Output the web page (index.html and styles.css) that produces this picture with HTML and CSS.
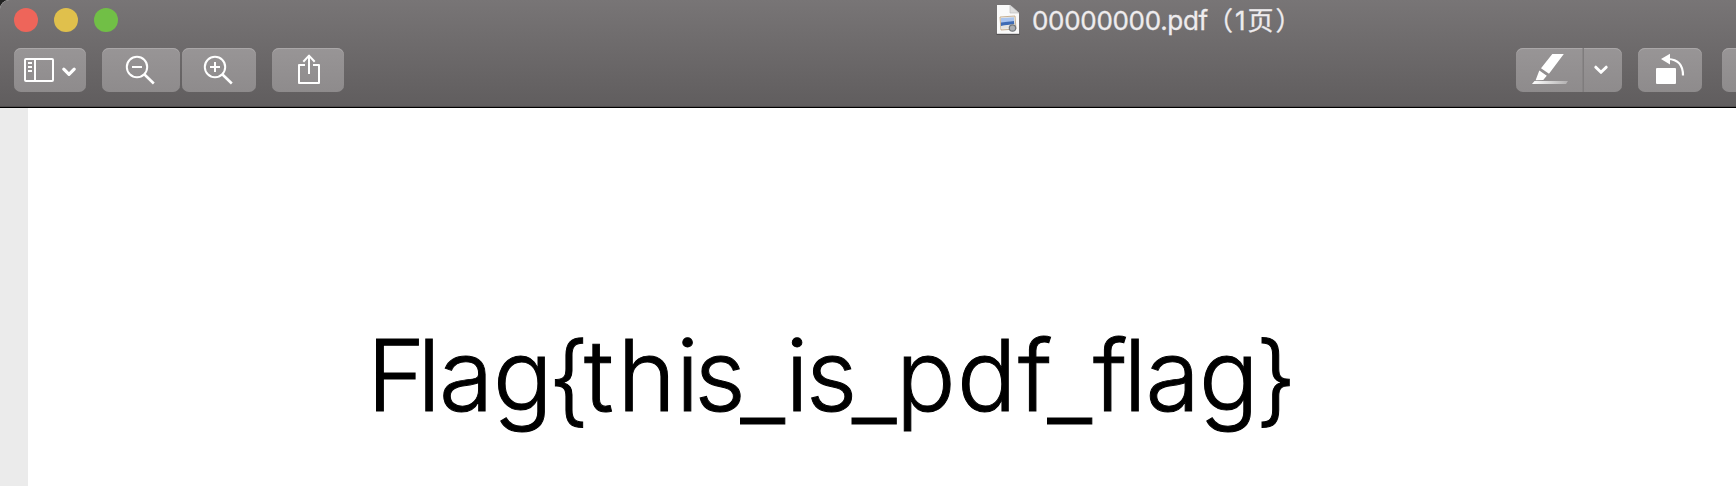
FILE: index.html
```
<!DOCTYPE html>
<html lang="zh">
<head>
<meta charset="utf-8">
<title>00000000.pdf</title>
<link rel="stylesheet" href="styles.css">
</head>
<body>
<div class="window">
  <header class="chrome">
    <div class="titlebar">
      <div class="lights"><i class="light red"></i><i class="light yellow"></i><i class="light green"></i></div>
      <div class="title">
        <svg class="doc" width="24" height="32" viewBox="0 0 24 32">
          <path d="M1 1h13l9 8v21H1z" fill="#fafafa"/>
          <path d="M14 1v8h9z" fill="#dedede" stroke="#bbb" stroke-width=".6"/>
          <path d="M.5 30.3h23" stroke="#4c494a"/>
          <path d="M4 13l15-1 1 13-15 1z" fill="#f4f1e8" stroke="#c2a98a" stroke-width=".9"/>
          <path d="M5 14l13-.8.3 4L5 19z" fill="#a9c4ee"/>
          <path d="M5 18.5l13-1.5.3 3L5 22z" fill="#3f6cb5"/>
          <path d="M5 22l10-1v3L5 25z" fill="#e5e5e2"/>
          <circle cx="16.5" cy="24" r="3.2" fill="#a9adb2" stroke="#73777b" stroke-width="1.2"/>
        </svg>
        <span class="name">00000000.pdf</span><span class="pages">（1页）</span>
      </div>
    </div>
    <div class="toolbar">
      <div class="group">
        <button class="btn sidebar"><svg width="72" height="44" viewBox="0 0 72 44" fill="none" stroke="#fff" stroke-width="2">
          <rect x="11" y="11" width="28" height="22" rx="1"/><path d="M21 11v22M14 15h4M14 19h4M14 23h4"/>
          <path d="M49.8 21.2L55 26.3l5.2-5.1" stroke-width="3.2" stroke-linecap="round" stroke-linejoin="round"/></svg></button>
        <button class="btn zoom-out"><svg width="78" height="44" viewBox="0 0 78 44" fill="none" stroke="#fff" stroke-width="2">
          <circle cx="35" cy="19" r="10.2"/><path d="M30 19h10"/><path d="M42.5 26.5l9.3 9" stroke-width="2.6"/></svg></button>
        <button class="btn zoom-in"><svg width="74" height="44" viewBox="0 0 74 44" fill="none" stroke="#fff" stroke-width="2">
          <circle cx="33" cy="19" r="10.2"/><path d="M28 19h10M33 14v10"/><path d="M40.5 26.5l9.3 9" stroke-width="2.6"/></svg></button>
        <button class="btn share"><svg width="72" height="44" viewBox="0 0 72 44" fill="none" stroke="#fff" stroke-width="2">
          <path d="M33 17h-6v18h20V17h-6M37 26V8M31.3 13.8L37 7.6l5.7 6.2" stroke-linejoin="round"/></svg></button>
      </div>
      <div class="group">
        <button class="btn markup"><svg width="106" height="44" viewBox="0 0 106 44" fill="#fff">
          <defs><linearGradient id="ink"><stop stop-color="#fff"/><stop offset="1" stop-color="#fff" stop-opacity=".3"/></linearGradient></defs>
          <path d="M66.5 0h1.5v44h-1.5z" fill="#7f7c7d"/>
          <path d="M36.3 6h11.5L33 25.8l-8-5.6zM23.3 22.5l7.5 5.3-3.6 4.1-7.6.4z"/><path d="M18.5 33H52l-2 3H16z" fill="url(#ink)"/>
          <path d="M79.8 19.2L85 24.3l5.2-5.1" fill="none" stroke="#fff" stroke-width="3" stroke-linecap="round" stroke-linejoin="round"/></svg></button>
        <button class="btn rotate"><svg width="64" height="44" viewBox="0 0 64 44" fill="#fff">
          <rect x="18" y="20" width="20" height="16" rx="1"/><path d="M23 11l9-5.2v10.7z"/>
          <path d="M30 11q15 .5 15 16.5" fill="none" stroke="#fff" stroke-width="2.2"/></svg></button>
        <button class="btn next"></button>
      </div>
    </div>
  </header>
  <main class="viewer"><div class="page">
    <svg class="sheet" width="1708" height="378" viewBox="28 108 1708 378">
      <text class="flag" y="410.5" x="367 417.5 439 493 548 584 617.5 676 694.5 740.5 785.5 806 852 896 957 1018 1047.5 1093 1123.5 1145.5 1199 1255.5" dy="0 0 0 0 3 -3 0 0 0 7 -7 0 7 -7 0 0 7 -7 0 0 0 3">Flag{this_is_pdf_flag}</text>
    </svg>
  </div></main>
</div>
</body>
</html>
```
FILE: styles.css
```
body { margin: 0; background: #222; overflow: hidden; }
.window { width: 1736px; height: 486px; overflow: hidden; border-top-left-radius: 9px; display: flex; flex-direction: column; background: #fff; }
.chrome { height: 108px; box-sizing: border-box; border-bottom: 1px solid #000; background: linear-gradient(#787576, #605d5e); box-shadow: inset 0 -1px #4f4c4d; }
.titlebar { height: 40px; display: flex; align-items: center; }
.lights { display: flex; gap: 16px; padding-left: 14px; width: 967px; }
.light { width: 24px; height: 24px; border-radius: 50%; }
.red { background: #ee655a; }
.yellow { background: #e0c04c; }
.green { background: #71bf46; }
.title { display: flex; align-items: center; height: 40px; color: #eeecee; font: 26px/40px Inter, "Noto Sans CJK SC", sans-serif; white-space: nowrap; padding-left: 15px; }
.doc { display: block; margin-top: -1px; }
.name { width: 175px; margin-left: 12px; letter-spacing: -0.3px; padding-top: 2px; -webkit-text-stroke: 0.3px #eeecee; }
.pages { font: 26px/40px Inter, "Noto Sans CJK SC", sans-serif; letter-spacing: 2px; padding-top: 1px; -webkit-text-stroke: 0.3px #eeecee; }
.toolbar { display: flex; justify-content: space-between; padding: 8px 0 0 14px; }
.group { display: flex; }
.btn { display: block; height: 44px; padding: 0; border: 0; border-radius: 7px; background: linear-gradient(#989596, #8e8b8c); box-shadow: inset 0 1px #aaa7a8; overflow: hidden; }
.btn svg { display: block; }
.sidebar, .zoom-in { margin-right: 16px; }
.zoom-out { margin-right: 2px; }
.markup { margin-right: 16px; }
.rotate { margin-right: 20px; }
.next { width: 14px; border-radius: 7px 0 0 7px; }
.viewer { flex: 1; background: #ebebeb; padding-left: 28px; display: flex; }
.page { flex: 1; background: #fff; }
.sheet { display: block; }
.flag { font: 300 99px Inter, "Liberation Sans", sans-serif; fill: #000; stroke: #000; stroke-width: 1px; }
```
